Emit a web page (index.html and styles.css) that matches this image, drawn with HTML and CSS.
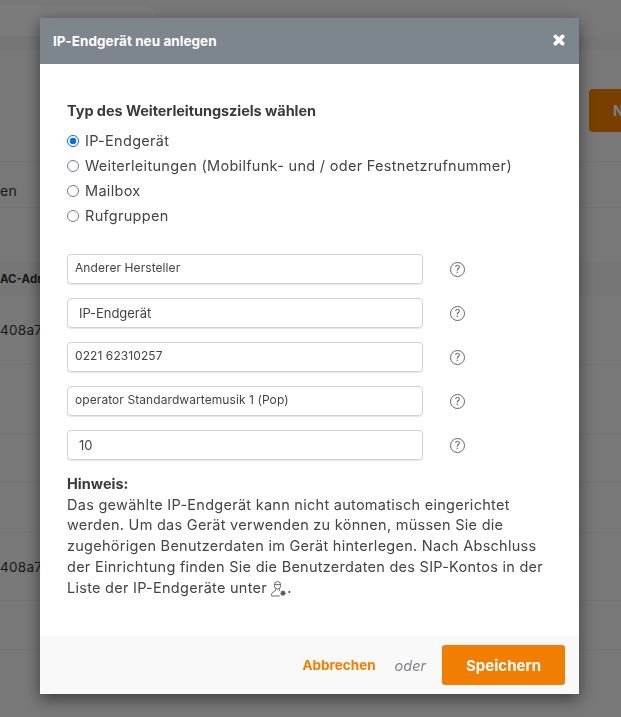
FILE: index.html
```html
<!DOCTYPE html>
<html lang="de">
<head>
<meta charset="utf-8">
<title>IP-Endgerät neu anlegen</title>
<link rel="stylesheet" href="styles.css">
</head>
<body>
<div class="page">
  <div class="top"><div class="tab"></div></div>
  <div class="band"></div>
  <div class="toolbar"><div class="side-btn">N</div></div>
  <div class="filter">en</div>
  <div class="gap"></div>
  <div class="thead">AC-Adresse</div>
  <div class="trow r69">408a7</div>
  <div class="trow r70"></div>
  <div class="trow r48"></div>
  <div class="trow r50"></div>
  <div class="trow r68">408a7</div>
  <div class="trow r49"></div>
</div>
<div class="overlay"></div>
<div class="modal">
  <div class="modal-head">
    <span class="modal-title">IP-Endgerät neu anlegen</span>
    <svg class="close" width="12" height="12" viewBox="0 0 12 12"><path d="M2.4 2.4l7.2 7.2M9.6 2.4l-7.2 7.2" fill="none" stroke="#fff" stroke-width="3.7" stroke-linecap="round"/></svg>
  </div>
  <div class="modal-body">
    <h2 class="section-title">Typ des Weiterleitungsziels wählen</h2>
    <div class="radios">
      <label class="radio"><span class="dot on"></span>IP-Endgerät</label>
      <label class="radio"><span class="dot"></span>Weiterleitungen (Mobilfunk- und / oder Festnetzrufnummer)</label>
      <label class="radio"><span class="dot"></span>Mailbox</label>
      <label class="radio"><span class="dot"></span>Rufgruppen</label>
    </div>
    <div class="fields">
      <div class="field"><div class="input select">Anderer Hersteller</div><span class="help">?</span></div>
      <div class="field"><div class="input wide">IP-Endgerät</div><span class="help">?</span></div>
      <div class="field"><div class="input select">0221 62310257</div><span class="help">?</span></div>
      <div class="field"><div class="input select">operator Standardwartemusik 1 (Pop)</div><span class="help">?</span></div>
      <div class="field"><div class="input wide">10</div><span class="help">?</span></div>
    </div>
    <div class="note">
      <strong>Hinweis:</strong><br>
      Das gewählte IP-Endgerät kann nicht automatisch eingerichtet<br>
      werden. Um das Gerät verwenden zu können, müssen Sie die<br>
      zugehörigen Benutzerdaten im Gerät hinterlegen. Nach Abschluss<br>
      der Einrichtung finden Sie die Benutzerdaten des SIP-Kontos in der<br>
      Liste der IP-Endgeräte unter <svg class="user-cog" width="16" height="16" viewBox="0 0 16 16" fill="none" stroke="#5a5a5a" stroke-width=".9"><ellipse cx="6.5" cy="4.3" rx="3.2" ry="3.8"/><path d="M3.3 3.6h6.4"/><path d="M4.7 7.8v1.6L1.2 11.8c-.7.5-.8 3.2-.8 3.2h8.4M8.3 7.8v1.6l1 .7"/><circle cx="12" cy="12.2" r="2.1" fill="#5a5a5a" stroke-width="1.1" stroke-dasharray="1 .65"/></svg>.
    </div>
  </div>
  <div class="modal-foot">
    <a class="cancel">Abbrechen</a>
    <span class="or">oder</span>
    <button class="save">Speichern</button>
  </div>
</div>
</body>
</html>
```
FILE: styles.css
```css
* { box-sizing: border-box; }
html, body { margin: 0; height: 100%; overflow: hidden; }
body { font-family: Inter, "Liberation Sans", sans-serif; color: #3c3c3c; background: #fff; }
.page { height: 717px; display: flex; flex-direction: column; background: #f1f1f1; color: #333; font-size: 14px; }
.top { height: 36px; flex: none; padding-top: 6px; }
.tab { width: 165px; height: 30px; margin-left: -10px; border-radius: 0 12px 0 0; background: #f6f6f6; }
.band { height: 14px; flex: none; background: #ececec; }
.toolbar { height: 112px; flex: none; padding-top: 39px; display: flex; justify-content: flex-end; border-bottom: 1px solid #e8e8e8; overflow: hidden; }
.side-btn { width: 32px; height: 43px; flex: none; line-height: 43px; padding-left: 24px; border-radius: 4px 0 0 4px; background: #f27e00; color: #fff; font-weight: 700; overflow: hidden; }
.filter { height: 46px; flex: none; padding-top: 20px; line-height: 18px; border-bottom: 1px solid #e8e8e8; letter-spacing: .3px; }
.gap { height: 54px; flex: none; }
.thead { height: 34px; flex: none; line-height: 34px; font-weight: 700; font-size: 11.5px; white-space: nowrap; background: #ececec; }
.trow { flex: none; display: flex; align-items: center; font-size: 13.5px; letter-spacing: .3px; border-bottom: 1px solid #e8e8e8; }
.r69 { height: 69px; }
.r70 { height: 70px; }
.r48 { height: 48px; }
.r50 { height: 50px; }
.r68 { height: 68px; }
.r49 { height: 49px; }
.overlay { position: fixed; inset: 0; background: rgba(0,0,0,.5); }
.modal { position: fixed; left: 40px; top: 18px; width: 539px; height: 676px; display: flex; flex-direction: column; background: #fff; box-shadow: 0 5px 15px rgba(0,0,0,.5); }
.modal-head { height: 46px; flex: none; display: flex; align-items: center; justify-content: space-between; padding: 0 14px 0 13px; background: #7d858d; color: #fff; }
.modal-title { font-size: 13.5px; font-weight: 700; letter-spacing: .05px; }
.close { margin-top: -2px; }
.modal-body { flex: 1; padding: 38px 27px 0; }
.section-title { margin: 0; font-size: 14.5px; line-height: 18px; font-weight: 700; letter-spacing: -.06px; color: #3a3a3a; }
.radios { margin-top: 8px; display: flex; flex-direction: column; }
.radio { display: flex; align-items: center; height: 25px; font-size: 14.5px; letter-spacing: .3px; color: #444; }
.dot { width: 12px; height: 12px; margin-right: 6px; border-radius: 50%; border: 1.3px solid #767a85; background: #fff; flex: none; }
.dot.on { border: 1.5px solid #0a6cf0; background: radial-gradient(circle, #0a6cf0 0 3px, #fff 3.6px); }
.fields { margin-top: 26px; display: flex; flex-direction: column; gap: 14px; }
.field { display: flex; align-items: center; }
.input { width: 356px; height: 30px; padding: 0 7px; display: flex; align-items: center; border: 1px solid #d2d2d2; border-radius: 4px; box-shadow: 0 1px 1px rgba(0,0,0,.1); font-size: 12px; letter-spacing: .08px; color: #444; }
.input.select { padding-bottom: 3px; }
.input.wide { padding-left: 11px; font-size: 13px; letter-spacing: -.05px; }
.help { width: 15px; height: 15px; margin-left: 27px; display: flex; align-items: center; justify-content: center; border: 1px solid #666; border-radius: 50%; font-size: 11px; color: #555; }
.note { margin-top: 14px; font-size: 14.5px; line-height: 20.7px; letter-spacing: .27px; color: #444; white-space: nowrap; }
.note strong { font-weight: 700; letter-spacing: 0; color: #3a3a3a; }
.user-cog { vertical-align: -4px; }
.modal-foot { height: 58px; flex: none; display: flex; align-items: center; justify-content: flex-end; padding: 0 14px 0 0; background: #f9f9f9; }
.cancel { font-size: 13.5px; font-weight: 700; color: #f27e00; }
.or { margin: 0 16px 0 19px; font-size: 14.5px; font-style: italic; color: #7d858d; }
.save { width: 123px; height: 40px; border: 0; border-radius: 3px; background: #f27e00; color: #fff; font: 700 15px Inter, "Liberation Sans", sans-serif; }
```
